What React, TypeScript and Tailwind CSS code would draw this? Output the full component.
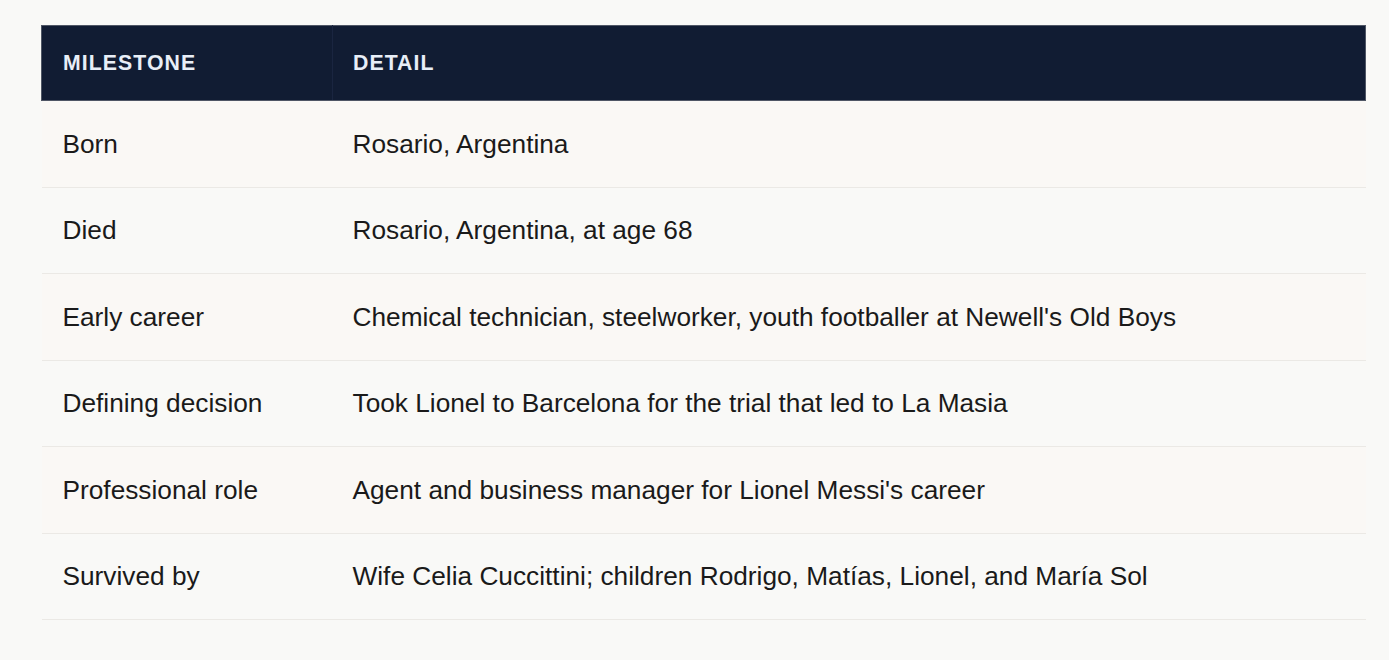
import React from 'react'

// One row per milestone in the table
const rows: { milestone: string; detail: string }[] = [
  { milestone: 'Born', detail: 'Rosario, Argentina' },
  { milestone: 'Died', detail: 'Rosario, Argentina, at age 68' },
  { milestone: 'Early career', detail: "Chemical technician, steelworker, youth footballer at Newell's Old Boys" },
  { milestone: 'Defining decision', detail: 'Took Lionel to Barcelona for the trial that led to La Masia' },
  { milestone: 'Professional role', detail: "Agent and business manager for Lionel Messi's career" },
  { milestone: 'Survived by', detail: 'Wife Celia Cuccittini; children Rodrigo, Matías, Lionel, and María Sol' },
]

export default function App() {
  return (
    <div className="min-h-screen bg-[#f9f9f7] pt-[25px] pl-[41px] font-['Liberation_Sans',Arial,sans-serif]">
      <table className="w-[1325px] border-collapse text-left">
        <thead>
          <tr className="bg-[#111c33]">
            <th className="w-[291px] border-y border-l border-[#4f5665] border-r border-r-[#1a2540] px-[21px] py-[20px] text-[21.25px] font-bold uppercase leading-[34px] tracking-wider text-[#e8eef7]">
              Milestone
            </th>
            <th className="border-y border-r border-[#4f5665] px-[20px] py-[20px] text-[21.25px] font-bold uppercase leading-[34px] tracking-wider text-[#e8eef7]">
              Detail
            </th>
          </tr>
        </thead>
        <tbody>
          {rows.map((row, i) => {
            const even = i % 2 === 0
            return (
              <tr key={row.milestone} className={`border-b border-[#ebe9e5] ${even ? 'bg-[#faf8f5]' : 'bg-[#f9f9f7]'}`}>
                <td className={`${even ? 'h-[87px]' : 'h-[86px]'} px-[21px] py-0 text-[26.25px] leading-[41px] text-[#1a1a1a]`}>{row.milestone}</td>
                <td className={`${even ? 'h-[87px]' : 'h-[86px]'} px-[20px] py-0 text-[26.25px] leading-[41px] text-[#1a1a1a]`}>{row.detail}</td>
              </tr>
            )
          })}
        </tbody>
      </table>
    </div>
  )
}
